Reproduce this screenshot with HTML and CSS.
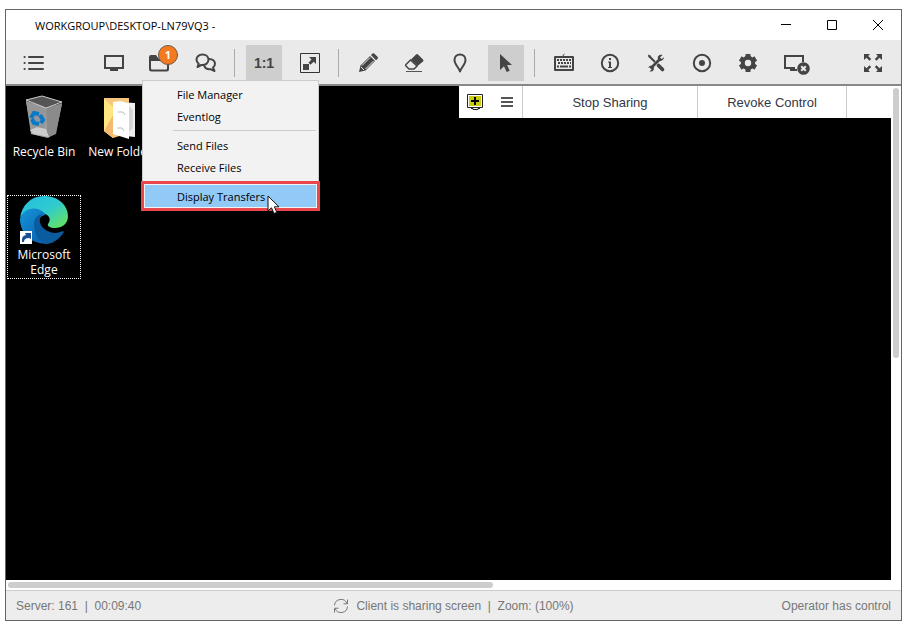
FILE: index.html
```html
<!DOCTYPE html>
<html lang="en">
<head>
  <meta charset="UTF-8" />
  <meta name="viewport" content="width=device-width, initial-scale=1.0"/>
  <title>WORKGROUP\DESKTOP-LN79VQ3 -</title>
  <link rel="stylesheet" href="styles.css">
</head>
<body>

  <div class="window">
    <header class="titlebar">
      <h1>WORKGROUP\DESKTOP-LN79VQ3 -</h1>
      <div class="window-buttons">
        <button type="button" aria-label="Minimize"><svg width="12" height="12" viewBox="0 0 12 12"><path d="M1 5.500h10" stroke="#000"/></svg></button>
        <button type="button" aria-label="Maximize"><svg width="12" height="12" viewBox="0 0 12 12"><path d="M1.500 1.500h9v9h-9z" fill="none" stroke="#000"/></svg></button>
        <button type="button" aria-label="Close"><svg width="12" height="12" viewBox="0 0 12 12"><path d="M1 1l10 10M11 1L1 11" stroke="#000"/></svg></button>
      </div>
    </header>

    <nav class="toolbar">
      <button class="tool list" type="button" aria-label="Session list">
        <svg width="24" height="24" viewBox="0 0 24 24" fill="none" stroke="#444" stroke-width="2" stroke-linecap="round"><path d="M7 6h14M7 12h14M7 18h14M2.500 6h.2M2.500 12h.2M2.500 18h.2"/></svg>
      </button>
      <button class="tool" type="button" aria-label="Monitor">
        <svg width="24" height="24" viewBox="0 0 24 24"><path d="M3 5h18v12H3z" fill="none" stroke="#444" stroke-width="2"/><path d="M8 18h8v2H8z" fill="#444"/></svg>
      </button>
      <div class="tool-menu">
        <button class="tool" type="button" aria-label="Files">
          <svg width="24" height="24" viewBox="0 0 24 24"><path d="M1 8.500V6q0-2 2-2h5l2.500 3.500H19q2 0 2 2V18q0 2.500-2.500 2.500h-15Q1 20.500 1 18zM3 10v7.500q0 1 1 1h14q1 0 1-1V10z" fill="#444" fill-rule="evenodd"/></svg>
        </button>
        <span class="badge">1</span>
        <div class="menu">
          <button type="button">File Manager</button>
          <button type="button">Eventlog</button>
          <hr>
          <button type="button">Send Files</button>
          <button type="button">Receive Files</button>
          <hr>
          <button class="selected" type="button">Display Transfers</button>
          <svg class="pointer" width="14" height="20" viewBox="0 0 14 20"><path d="M1 1v15l3.500-3.200L7 18.500l2.800-1.200-2.400-5.500H12z" fill="#fff" stroke="#111"/></svg>
        </div>
      </div>
      <button class="tool" type="button" aria-label="Chat">
        <svg width="24" height="24" viewBox="0 0 24 24" fill="none" stroke="#444" stroke-width="2" stroke-linejoin="round"><path d="M8.500 3.500c-3.600 0-6 2.400-6 5.200 0 1.700.8 3 2.200 4L3.500 16l3.800-2c4 .4 7.200-1.800 7.200-5.200 0-3-2.500-5.300-6-5.300z"/><path d="M15 8c3.500-.2 6 2 6 4.800 0 1.600-.7 2.900-2 3.800l1.500 3.400-4-1.800c-3.400.2-6-1.200-6.500-4.200"/></svg>
      </button>
      <span class="divider"></span>
      <button class="tool active ratio" type="button">1:1</button>
      <button class="tool" type="button" aria-label="Scale to fit">
        <svg width="24" height="24" viewBox="0 0 24 24"><path d="M2.500 2.500h19v19h-19z" fill="none" stroke="#333"/><path d="M5 13h6v6H5zM11 6h7v7l-2.300-2.300-3.200 3.100-2-2 3-3.300z" fill="#444"/></svg>
      </button>
      <span class="divider"></span>
      <button class="tool" type="button" aria-label="Draw">
        <svg width="24" height="24" viewBox="0 0 24 24"><path d="M3 21l1.500-6.500L14 5l5 5-9.500 9.500z" fill="#444"/><path d="M15 4l1.500-1.500q1-.8 2 .2l3 3q1 1 .1 2L20 9.200z" fill="#444"/><path d="M6 14.500l8-8M9.500 18l8-8M5 16l3 3" stroke="#eaeaea"/></svg>
      </button>
      <button class="tool" type="button" aria-label="Erase">
        <svg width="24" height="24" viewBox="0 0 24 24"><path d="M9 8.500L14 3.500q1-.8 2 0l5 5q1 1 0 2L15.500 15z" fill="#444"/><path d="M8.500 9L4 13.500q-.8.800 0 1.500l3 3h5l3-3z" fill="none" stroke="#444" stroke-width="1.500"/><path d="M4 20.500h16" stroke="#555"/></svg>
      </button>
      <button class="tool" type="button" aria-label="Marker">
        <svg width="24" height="24" viewBox="0 0 24 24"><path d="M12 20.500c-.8-3.500-5.500-7-5.500-11.500 0-3.200 2.300-5.500 5.500-5.500s5.500 2.300 5.500 5.500c0 4.500-4.700 8-5.500 11.500z" fill="none" stroke="#444" stroke-width="2" stroke-linejoin="round"/></svg>
      </button>
      <button class="tool active" type="button" aria-label="Pointer">
        <svg width="24" height="24" viewBox="0 0 24 24"><path d="M6 3v16l4-3.800 2.700 5.900 3-1.300-2.600-5.800H18z" fill="#444"/></svg>
      </button>
      <span class="divider"></span>
      <button class="tool" type="button" aria-label="Keyboard">
        <svg width="24" height="24" viewBox="0 0 24 24"><path d="M3 6h18v13H3z" fill="none" stroke="#444" stroke-width="2" stroke-linejoin="round"/><path d="M11 5q0-1.500 1.500-2" fill="none" stroke="#444"/><path d="M5 9h14M6 12h13" stroke="#444" stroke-width="2" stroke-dasharray="2 1"/><path d="M5 15.500h2m1 0h8m1 0h2" stroke="#444" stroke-width="2"/></svg>
      </button>
      <button class="tool" type="button" aria-label="System info">
        <svg width="24" height="24" viewBox="0 0 24 24"><circle cx="12" cy="12" r="8.200" fill="none" stroke="#444" stroke-width="2"/><path d="M11 7h2v2h-2zM10 10.500h3V16h1v1h-4v-1h1v-4.500h-1z" fill="#444"/></svg>
      </button>
      <button class="tool" type="button" aria-label="Tools">
        <svg width="24" height="24" viewBox="0 0 24 24"><path d="M5 5l6 6M14 14l5 5" stroke="#444" stroke-width="2"/><path d="M14.500 14.500l4 4" stroke="#444" stroke-width="3.600" stroke-linecap="round"/><path d="M4 3.500l2.500 1L8 8 4.500 6z" fill="#444"/><path d="M6.500 17.500l10-10" stroke="#444" stroke-width="2.600"/><path d="M18.500 4c-2.500-1-5.500 1-4.500 4s5 2.500 6.200-1.800L17.500 8 16 6.500zM4 16.500c2-2.500 4.500-2 5.500-.5 1.300 2.500-.5 5-4 4.500L8 18l-1.500-1.500z" fill="#444"/></svg>
      </button>
      <button class="tool" type="button" aria-label="Record">
        <svg width="24" height="24" viewBox="0 0 24 24"><circle cx="12" cy="12" r="8.200" fill="none" stroke="#444" stroke-width="2"/><circle cx="12" cy="12" r="3" fill="#444"/></svg>
      </button>
      <button class="tool" type="button" aria-label="Settings">
        <svg width="24" height="24" viewBox="0 0 24 24"><circle cx="12" cy="12" r="5.200" fill="none" stroke="#444" stroke-width="4"/><path d="M12 3v3.500M12 17.500V21M4.200 7.500l3 1.800M16.800 14.700l3 1.800M4.200 16.500l3-1.800M16.800 9.300l3-1.800" stroke="#444" stroke-width="5"/></svg>
      </button>
      <button class="tool" type="button" aria-label="Disconnect">
        <svg width="32" height="24" viewBox="0 0 32 24"><path d="M17 17H7V5h18v6" fill="none" stroke="#444" stroke-width="2"/><path d="M12 18h7v2h-7z" fill="#444"/><circle cx="25.500" cy="17.500" r="6.300" fill="#444"/><path d="M23.200 15.200l4.600 4.600M27.800 15.200l-4.600 4.600" stroke="#eaeaea" stroke-width="2"/></svg>
      </button>
      <button class="tool fullscreen" type="button" aria-label="Full screen">
        <svg width="24" height="24" viewBox="0 0 24 24"><path d="M3 3h6L7.200 5l3 3L8.500 9.700l-3-3L3 9zM21 3h-6l1.800 2-3 3 1.700 1.700 3-3L21 9zM3 21h6l-1.800-2 3-3-1.700-1.700-3 3L3 15zM21 21h-6l1.800-2-3-3 1.700-1.700 3 3L21 15z" fill="#444"/></svg>
      </button>
    </nav>

    <main class="viewport">
      <section class="desktop">
        <a class="shortcut" href="#">
          <svg width="48" height="48" viewBox="0 0 48 48">
            <path d="M6 8l5 33 17 4 8-6 6-28-19 5z" fill="#a5a5a5"/>
            <path d="M6 8l20 6-1 30-13-3z" fill="#969696"/>
            <path d="M26 15l16-5-6 31-9 4z" fill="#8b8b8b"/>
            <path d="M6 7l16-4 20 6-16 6z" fill="#555" stroke="#ccc"/>
            <path d="M10 37l7-3 9 2 3 8-16-3z" fill="#ccc"/>
            <g fill="none" stroke="#0879c9" stroke-width="4"><path d="M11 25l3-5 5 1"/><path d="M20 22l3 5-2 3"/><path d="M19 31l-5-1-2-4"/></g>
          </svg>
          <span>Recycle Bin</span>
        </a>
        <a class="shortcut" href="#">
          <svg width="48" height="48" viewBox="0 0 48 48">
            <path d="M8 5h25v35L17 45 8 38z" fill="#f7c77c"/>
            <path d="M22 9l17 1v34l-10-1-7-3z" fill="#eee"/>
            <path d="M17 9l8-1 8 3v35l-16-5z" fill="#fff"/>
            <path d="M22 19h5l2 3M21 35h5l2 3M34 14v24M36 16v20" fill="none" stroke="#bbb"/>
            <path d="M8 6l9 8v31l-9-7z" fill="#ffe680"/>
            <path d="M8 38l9-16v23z" fill="#f4ba70"/>
          </svg>
          <span>New Folder</span>
        </a>
        <a class="shortcut focused" href="#">
          <svg width="48" height="48" viewBox="0 0 48 48">
            <defs>
              <linearGradient id="edge-top" x1="0" y1="0" x2="1" y2="1"><stop offset="0" stop-color="#25bce0"/><stop offset=".5" stop-color="#2fcbd0"/><stop offset="1" stop-color="#6ee84c"/></linearGradient>
              <linearGradient id="edge-side" x1="0" y1="0" x2="1" y2="1"><stop offset="0" stop-color="#1596d8"/><stop offset="1" stop-color="#0754a5"/></linearGradient>
            </defs>
            <path d="M0 22C2 9 11 0 24 0c15 0 24 10 24 20 0 8-6 12-13 12-5 0-8-2-7-4 3-4 2-8-3-10C17 12 5 13 0 22z" fill="url(#edge-top)"/>
            <path d="M0 23C3 14 12 10 20 14c4 2 6 4 5 5-5 1-7 5-7 9 0 9 8 14 16 18C18 52 0 41 0 23z" fill="url(#edge-side)"/>
            <path d="M14 28c0-5 3-9 8-10-6 8 1 18 13 19 5 0 8-3 9-1-5 8-12 12-19 12-7-3-11-11-11-20z" fill="#0b5c9e"/>
            <path d="M0 35h12v13H0z" fill="#fff"/>
            <path d="M2 46q-1-6 4-7l-1-2h6v6l-2-1q-5 0-5 4z" fill="#1d4e96"/>
          </svg>
          <span>Microsoft Edge</span>
        </a>

        <div class="sharebar">
          <div class="share-icons">
            <svg width="18" height="18" viewBox="0 0 18 18"><path d="M1.500 1.500h15v13h-15z" fill="#fff" stroke="#222"/><path d="M3 3h12v10H3z" fill="#c9cc12"/><path d="M9 4v8M5 8h8" stroke="#000" stroke-width="2"/><path d="M5 15.500h2v1h5v-1h2" fill="none" stroke="#222"/></svg>
            <button type="button" aria-label="Share menu"><svg width="12" height="10" viewBox="0 0 12 10"><path d="M0 1h12M0 5h12M0 9h12" stroke="#555" stroke-width="2"/></svg></button>
          </div>
          <button class="stop" type="button">Stop Sharing</button>
          <button class="revoke" type="button">Revoke Control</button>
          <div class="share-end"></div>
        </div>
      </section>
      <div class="scroll-v"><div class="thumb"></div></div>
      <div class="scroll-h"><div class="thumb"></div></div>
    </main>

    <footer class="statusbar">
      <span>Server: 161&nbsp; |&nbsp; 00:09:40</span>
      <span class="status">
        <svg width="16" height="16" viewBox="0 0 16 16" fill="none" stroke="#777"><path d="M1.500 7.500A6.500 6.500 0 0 1 14 5.500M14.500 8.500A6.500 6.500 0 0 1 2 10.500M14.500 1.500v4.300h-4M1.500 14.500v-4.300h4"/></svg>
        Client is sharing screen&nbsp; |&nbsp; Zoom: (100%)
      </span>
      <span class="control">Operator has control</span>
    </footer>
  </div>

</body>
</html>
```
FILE: styles.css
```css
* {
  box-sizing: border-box;
}
body {
  margin: 0;
  padding: 9px 9px 9px 5px;
  min-height: 100vh;
  display: flex;
  background-color: #fff;
  font-family: "Open Sans", "Noto Sans", sans-serif;
  font-size: 11px;
  color: #000;
}
button {
  margin: 0;
  padding: 0;
  border: none;
  background: none;
  font: inherit;
  color: inherit;
}
svg {
  display: block;
  flex: none;
}
.window {
  flex: 1;
  display: flex;
  flex-direction: column;
  border: 1px solid #666;
}

/* title bar */
.titlebar {
  display: flex;
  align-items: center;
  height: 30px;
  padding-left: 29px;
}
.titlebar h1 {
  margin: 0;
  font-size: 11px;
  font-weight: normal;
}
.window-buttons {
  display: flex;
  margin-left: auto;
}
.window-buttons button {
  display: flex;
  align-items: center;
  justify-content: center;
  width: 46px;
  height: 28px;
}

/* toolbar */
.toolbar {
  display: flex;
  gap: 10px;
  padding: 5px 10px 3px;
  background-color: #eaeaea;
  border-bottom: 2px solid #888;
}
.tool {
  display: flex;
  align-items: center;
  justify-content: center;
  width: 36px;
  height: 36px;
}
.tool.active {
  background-color: #cecece;
}
.list {
  margin-right: 34px;
}
.fullscreen {
  margin-left: auto;
}
.ratio {
  font-family: "Liberation Sans", Arial, sans-serif;
  font-size: 14px;
  font-weight: bold;
  color: #444;
}
.divider {
  width: 2px;
  height: 28px;
  margin-top: 4px;
  border-left: 1px solid #aaa;
}
.tool-menu {
  position: relative;
  z-index: 2;
}
.badge {
  position: absolute;
  top: 0;
  left: 16px;
  width: 20px;
  height: 20px;
  border: 1px solid #6b5a4a;
  border-radius: 50%;
  background-color: #f47a20;
  color: #fff;
  font-weight: bold;
  line-height: 18px;
  text-align: center;
}

/* files menu */
.menu {
  position: absolute;
  top: 35px;
  left: 0;
  width: 177px;
  padding: 2px;
  border: 1px solid #ccc;
  background-color: #f2f2f2;
}
.menu button {
  display: block;
  width: 100%;
  height: 22px;
  padding-left: 32px;
  text-align: left;
}
.menu hr {
  height: 1px;
  margin: 3px 0 3px 28px;
  border: none;
  background-color: #ccc;
}
.menu .selected {
  background-color: #91c9f7;
  outline: 3px solid #e8474c;
  outline-offset: 1px;
}
.pointer {
  position: absolute;
  right: 37px;
  bottom: -6px;
}

/* remote screen */
.viewport {
  flex: 1;
  display: grid;
  grid-template-columns: 1fr 10px;
  grid-template-rows: 1fr 10px;
}
.desktop {
  position: relative;
  display: grid;
  grid-template-columns: 74px 74px;
  grid-auto-rows: 84px;
  gap: 19px 2px;
  align-content: start;
  padding: 6px 1px;
  background-color: #000;
}
.shortcut {
  display: flex;
  flex-direction: column;
  align-items: center;
  gap: 3px;
  border: 1px solid transparent;
  color: #fff;
  font-size: 12px;
  line-height: 15px;
  text-align: center;
  text-decoration: none;
}
.shortcut:nth-child(-n+2) span {
  white-space: nowrap;
}
.shortcut.focused {
  border: 1px dotted #fff;
}
.sharebar {
  position: absolute;
  top: 0;
  right: 0;
  display: flex;
  height: 32px;
  background-color: #fff;
  font-family: "Liberation Sans", Arial, sans-serif;
  font-size: 13px;
  color: #333645;
}
.sharebar > * {
  border-right: 1px solid #ccc;
}
.share-icons {
  display: flex;
  align-items: center;
  justify-content: space-between;
  width: 64px;
  padding: 0 9px 0 7px;
}
.stop {
  width: 175px;
}
.revoke {
  width: 149px;
}
.sharebar .share-end {
  width: 44px;
  border: none;
}
.scroll-v {
  padding: 2px;
}
.scroll-h {
  padding: 2px;
}
.thumb {
  border-radius: 3px;
  background-color: #cdcdcd;
}
.scroll-v .thumb {
  width: 6px;
  height: 55%;
}
.scroll-h .thumb {
  width: 55%;
  height: 6px;
}

/* status bar */
.statusbar {
  display: grid;
  grid-template-columns: 1fr auto 1fr;
  align-items: center;
  height: 30px;
  padding: 0 10px;
  border-top: 1px solid #ccc;
  background-color: #ededed;
  font-family: "Liberation Sans", Arial, sans-serif;
  font-size: 12px;
  color: #777;
}
.status {
  display: flex;
  align-items: center;
  gap: 7px;
}
.control {
  text-align: right;
}
```
